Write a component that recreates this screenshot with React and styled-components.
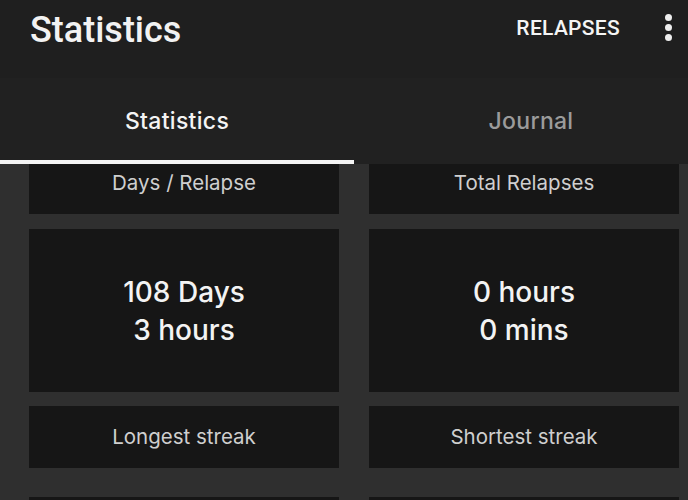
import styled, { createGlobalStyle } from "styled-components";

const Global = createGlobalStyle`
  html, body {
    margin: 0;
    padding: 0;
    background: #2f2f2f;
    overflow: hidden;
  }
`;

const App = () => {
  return (
    <Screen>
      <Global />
      <Header>
        <Title>Statistics</Title>
        <Actions>
          <ActionText>RELAPSES</ActionText>
          <Dots>
            <Dot />
            <Dot />
            <Dot />
          </Dots>
        </Actions>
      </Header>
      <TabBar>
        <Tab $active>Statistics</Tab>
        <Tab>Journal</Tab>
      </TabBar>
      <Content>
        <Grid>
          <Card>Days / Relapse</Card>
          <Card>Total Relapses</Card>
          <Card $value>
            <span>108 Days</span>
            <span>3 hours</span>
          </Card>
          <Card $value>
            <span>0 hours</span>
            <span>0 mins</span>
          </Card>
          <Card $last>Longest streak</Card>
          <Card $last>Shortest streak</Card>
          <Card $value />
          <Card $value />
        </Grid>
      </Content>
    </Screen>
  );
};

const Screen = styled.div`
  width: 708px;
  height: 500px;
  display: flex;
  flex-direction: column;
  background: #2f2f2f;
  overflow: hidden;
`;

const Header = styled.header`
  height: 78px;
  flex-shrink: 0;
  box-sizing: border-box;
  padding: 12px 0 0 30px;
  background: #1f1f1f;
  display: flex;
  justify-content: space-between;
  align-items: flex-start;
`;

const Title = styled.h1`
  margin: 0;
  font-family: Roboto, "Liberation Sans", sans-serif;
  font-weight: 500;
  font-size: 36px;
  line-height: 36px;
  color: #f2f2f2;
`;

const Actions = styled.div`
  display: flex;
  align-items: flex-start;
  padding-top: 1px;
`;

const ActionText = styled.span`
  font-family: Roboto, "Liberation Sans", sans-serif;
  font-weight: 500;
  font-size: 21px;
  line-height: 21px;
  margin-top: 5px;
  margin-right: 8px;
  color: #f5f5f5;
  letter-spacing: 0.3px;
`;

const Dots = styled.div`
  width: 80px;
  display: flex;
  flex-direction: column;
  align-items: center;
  gap: 3px;
  padding-top: 1px;
`;

const Dot = styled.span`
  width: 7px;
  height: 7px;
  border-radius: 50%;
  background: #eeeeee;
`;

const TabBar = styled.nav`
  height: 86px;
  flex-shrink: 0;
  background: #212121;
  display: flex;
`;

const Tab = styled.div`
  width: 354px;
  box-sizing: border-box;
  padding-top: 4px;
  display: flex;
  align-items: center;
  justify-content: center;
  font-family: Inter, "Noto Sans", sans-serif;
  font-size: 23px;
  font-weight: 500;
  letter-spacing: 0.3px;
  color: ${(p) => (p.$active ? "#f4f4f4" : "#9b9b9b")};
  border-bottom: 4px solid ${(p) => (p.$active ? "#f4f4f4" : "transparent")};
`;

const Content = styled.main`
  flex: 1;
  overflow: hidden;
  padding: 0 29px;
`;

const Grid = styled.div`
  margin-top: -12px;
  display: grid;
  grid-template-columns: 310px 310px;
  column-gap: 30px;
  row-gap: 14.5px;
`;

const Card = styled.div`
  background: #161616;
  height: ${(p) => (p.$value ? "163px" : "62px")};
  margin-bottom: ${(p) => (p.$last ? "14px" : "0")};
  display: flex;
  flex-direction: column;
  align-items: center;
  justify-content: center;
  padding-top: ${(p) => (p.$value ? "1px" : "0")};
  box-sizing: border-box;
  font-family: Inter, "Noto Sans", sans-serif;
  font-size: ${(p) => (p.$value ? "28px" : "20.5px")};
  line-height: ${(p) => (p.$value ? "38px" : "24px")};
  font-weight: ${(p) => (p.$value ? 500 : 400)};
  color: ${(p) => (p.$value ? "#f3f3f3" : "#cfcfcf")};
`;

export default App;
